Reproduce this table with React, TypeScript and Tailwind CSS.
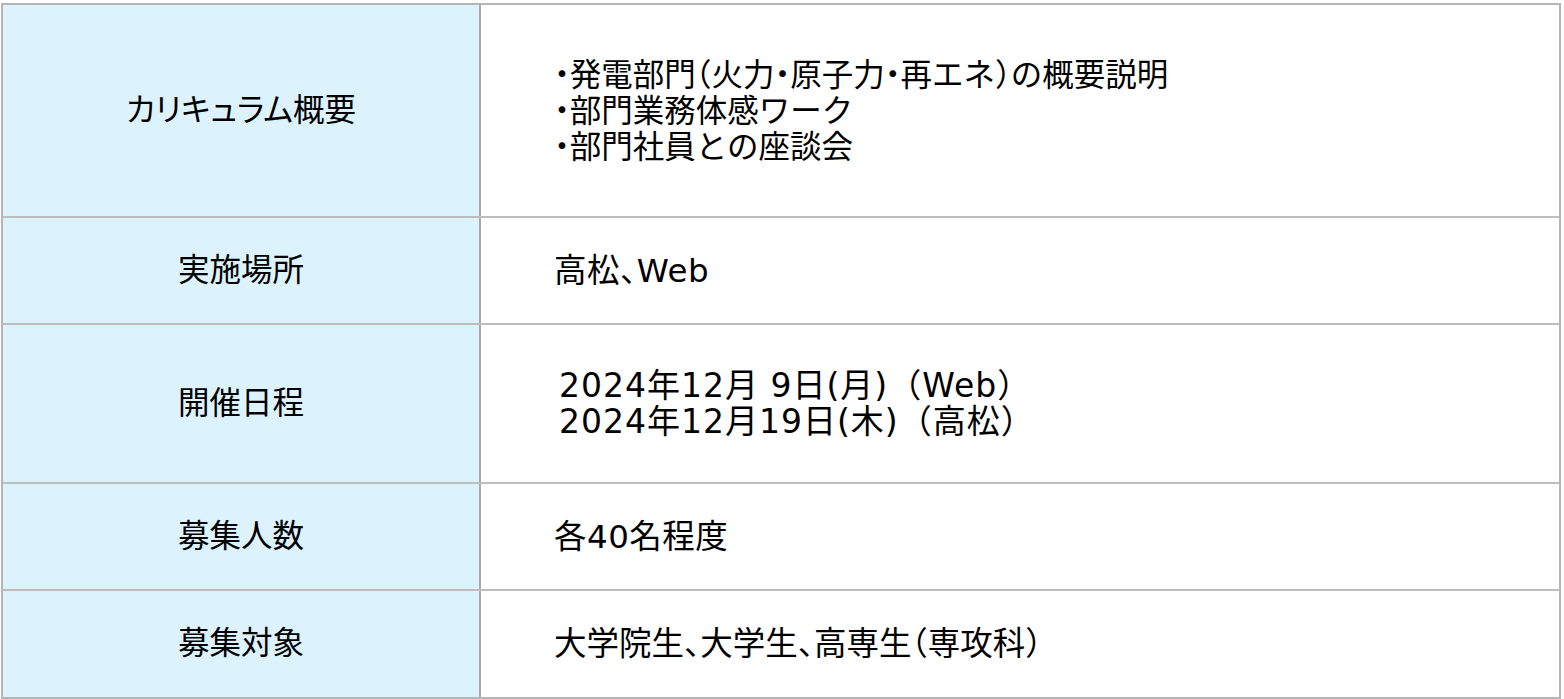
import React from 'react';

const rows: { label: string; lines: string[]; h: string; body: string }[] = [
    {
        label: 'カリキュラム概要',
        lines: ['・発電部門（火力・原子力・再エネ）の概要説明', '・部門業務体感ワーク', '・部門社員との座談会'],
        h: 'h-[213px]',
        body: 'pl-[73px] text-[31.5px] leading-[36px] [font-feature-settings:"halt"]',
    },
    {
        label: '実施場所',
        lines: ['高松、Web'],
        h: 'h-[107px]',
        body: 'pl-[73px] text-[32.5px] leading-[36px] tracking-[0.5px] [font-feature-settings:"halt"]',
    },
    {
        label: '開催日程',
        lines: ['2024年12月 9日(月)（Web）', '2024年12月19日(木)（高松）'],
        h: 'h-[159px]',
        body: 'pl-[78px] text-[33px] leading-[36px] tracking-[1px]',
    },
    {
        label: '募集人数',
        lines: ['各40名程度'],
        h: 'h-[107px]',
        body: 'pl-[73px] text-[32.5px] leading-[36px] tracking-[0.5px] [font-feature-settings:"halt"]',
    },
    {
        label: '募集対象',
        lines: ['大学院生、大学生、高専生（専攻科）'],
        h: 'h-[106px]',
        body: 'pl-[73px] text-[32.5px] leading-[36px] [font-feature-settings:"halt"]',
    },
];

export default function App() {
    return (
        <div
            className="w-[1564px] h-[699px] bg-white pt-[3px] pl-[1px] text-black"
            style={{ fontFamily: '"DejaVu Sans", "Noto Sans CJK JP", sans-serif' }}
        >
            <div className="w-[1560px] border-2 border-[#b5b5b5]">
                {rows.map((row, i) => (
                    <div
                        key={row.label}
                        className={`flex ${row.h} ${i < rows.length - 1 ? 'border-b-2 border-[#bdbdbd]' : ''}`}
                    >
                        {/* label cell */}
                        <div className="w-[478px] shrink-0 bg-[#dcf2fd] border-r-2 border-[#a3abb0] flex items-center justify-center text-[31.5px] leading-none [font-feature-settings:'palt']">
                            {row.label}
                        </div>
                        {/* content cell */}
                        <div className={`flex-1 flex flex-col justify-center ${row.body}`}>
                            {row.lines.map((l) => (
                                <div key={l} className="whitespace-pre">{l}</div>
                            ))}
                        </div>
                    </div>
                ))}
            </div>
        </div>
    );
}
